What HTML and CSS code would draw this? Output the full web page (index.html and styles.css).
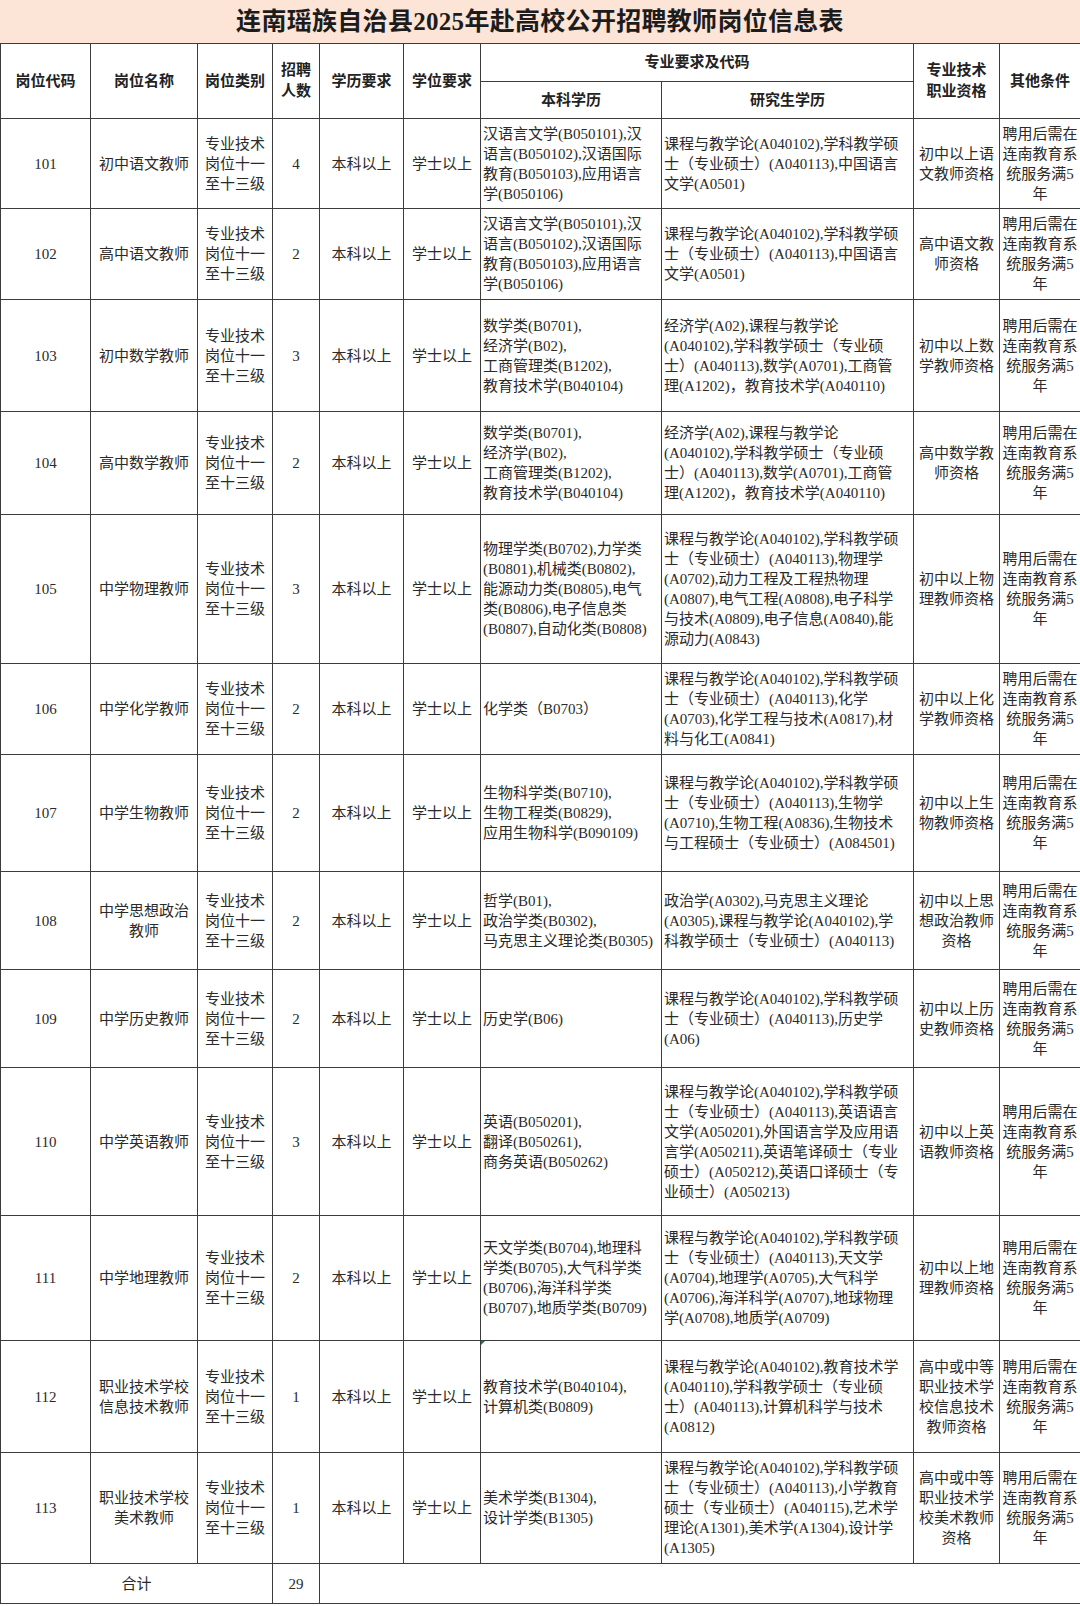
FILE: index.html
```html
<!DOCTYPE html>
<html lang="zh-CN">
<head>
<meta charset="utf-8">
<title>连南瑶族自治县2025年赴高校公开招聘教师岗位信息表</title>
<link rel="stylesheet" href="styles.css">
</head>
<body>
<div class="sheet">
  <div class="title">连南瑶族自治县2025年赴高校公开招聘教师岗位信息表</div>
  <table class="grid">
    <colgroup>
      <col class="c1"><col class="c2"><col class="c3"><col class="c4"><col class="c5">
      <col class="c6"><col class="c7"><col class="c8"><col class="c9"><col class="c10">
    </colgroup>
    <thead>
      <tr class="h38">
        <th rowspan="2">岗位代码</th>
        <th rowspan="2">岗位名称</th>
        <th rowspan="2">岗位类别</th>
        <th rowspan="2">招聘<br>人数</th>
        <th rowspan="2">学历要求</th>
        <th rowspan="2">学位要求</th>
        <th colspan="2">专业要求及代码</th>
        <th rowspan="2">专业技术<br>职业资格</th>
        <th rowspan="2">其他条件</th>
      </tr>
      <tr class="h37">
        <th>本科学历</th>
        <th>研究生学历</th>
      </tr>
    </thead>
    <tbody>
      <tr class="h90">
        <td>101</td><td>初中语文教师</td><td>专业技术<br>岗位十一<br>至十三级</td><td>4</td><td>本科以上</td><td>学士以上</td>
        <td class="left">汉语言文学(B050101),汉<br>语言(B050102),汉语国际<br>教育(B050103),应用语言<br>学(B050106)</td>
        <td class="left">课程与教学论(A040102),学科教学硕<br>士（专业硕士）(A040113),中国语言<br>文学(A0501)</td>
        <td>初中以上语<br>文教师资格</td><td>聘用后需在<br>连南教育系<br>统服务满5<br>年</td>
      </tr>
      <tr class="h91">
        <td>102</td><td>高中语文教师</td><td>专业技术<br>岗位十一<br>至十三级</td><td>2</td><td>本科以上</td><td>学士以上</td>
        <td class="left">汉语言文学(B050101),汉<br>语言(B050102),汉语国际<br>教育(B050103),应用语言<br>学(B050106)</td>
        <td class="left">课程与教学论(A040102),学科教学硕<br>士（专业硕士）(A040113),中国语言<br>文学(A0501)</td>
        <td>高中语文教<br>师资格</td><td>聘用后需在<br>连南教育系<br>统服务满5<br>年</td>
      </tr>
      <tr class="h112">
        <td>103</td><td>初中数学教师</td><td>专业技术<br>岗位十一<br>至十三级</td><td>3</td><td>本科以上</td><td>学士以上</td>
        <td class="left">数学类(B0701),<br>经济学(B02),<br>工商管理类(B1202),<br>教育技术学(B040104)</td>
        <td class="left">经济学(A02),课程与教学论<br>(A040102),学科教学硕士（专业硕<br>士）(A040113),数学(A0701),工商管<br>理(A1202)，教育技术学(A040110)</td>
        <td>初中以上数<br>学教师资格</td><td>聘用后需在<br>连南教育系<br>统服务满5<br>年</td>
      </tr>
      <tr class="h103">
        <td>104</td><td>高中数学教师</td><td>专业技术<br>岗位十一<br>至十三级</td><td>2</td><td>本科以上</td><td>学士以上</td>
        <td class="left">数学类(B0701),<br>经济学(B02),<br>工商管理类(B1202),<br>教育技术学(B040104)</td>
        <td class="left">经济学(A02),课程与教学论<br>(A040102),学科教学硕士（专业硕<br>士）(A040113),数学(A0701),工商管<br>理(A1202)，教育技术学(A040110)</td>
        <td>高中数学教<br>师资格</td><td>聘用后需在<br>连南教育系<br>统服务满5<br>年</td>
      </tr>
      <tr class="h149">
        <td>105</td><td>中学物理教师</td><td>专业技术<br>岗位十一<br>至十三级</td><td>3</td><td>本科以上</td><td>学士以上</td>
        <td class="left">物理学类(B0702),力学类<br>(B0801),机械类(B0802),<br>能源动力类(B0805),电气<br>类(B0806),电子信息类<br>(B0807),自动化类(B0808)</td>
        <td class="left">课程与教学论(A040102),学科教学硕<br>士（专业硕士）(A040113),物理学<br>(A0702),动力工程及工程热物理<br>(A0807),电气工程(A0808),电子科学<br>与技术(A0809),电子信息(A0840),能<br>源动力(A0843)</td>
        <td>初中以上物<br>理教师资格</td><td>聘用后需在<br>连南教育系<br>统服务满5<br>年</td>
      </tr>
      <tr class="h91">
        <td>106</td><td>中学化学教师</td><td>专业技术<br>岗位十一<br>至十三级</td><td>2</td><td>本科以上</td><td>学士以上</td>
        <td class="left">化学类（B0703）</td>
        <td class="left">课程与教学论(A040102),学科教学硕<br>士（专业硕士）(A040113),化学<br>(A0703),化学工程与技术(A0817),材<br>料与化工(A0841)</td>
        <td>初中以上化<br>学教师资格</td><td>聘用后需在<br>连南教育系<br>统服务满5<br>年</td>
      </tr>
      <tr class="h117">
        <td>107</td><td>中学生物教师</td><td>专业技术<br>岗位十一<br>至十三级</td><td>2</td><td>本科以上</td><td>学士以上</td>
        <td class="left">生物科学类(B0710),<br>生物工程类(B0829),<br>应用生物科学(B090109)</td>
        <td class="left">课程与教学论(A040102),学科教学硕<br>士（专业硕士）(A040113),生物学<br>(A0710),生物工程(A0836),生物技术<br>与工程硕士（专业硕士）(A084501)</td>
        <td>初中以上生<br>物教师资格</td><td>聘用后需在<br>连南教育系<br>统服务满5<br>年</td>
      </tr>
      <tr class="h98">
        <td>108</td><td>中学思想政治<br>教师</td><td>专业技术<br>岗位十一<br>至十三级</td><td>2</td><td>本科以上</td><td>学士以上</td>
        <td class="left">哲学(B01),<br>政治学类(B0302),<br>马克思主义理论类(B0305)</td>
        <td class="left">政治学(A0302),马克思主义理论<br>(A0305),课程与教学论(A040102),学<br>科教学硕士（专业硕士）(A040113)</td>
        <td>初中以上思<br>想政治教师<br>资格</td><td>聘用后需在<br>连南教育系<br>统服务满5<br>年</td>
      </tr>
      <tr class="h98">
        <td>109</td><td>中学历史教师</td><td>专业技术<br>岗位十一<br>至十三级</td><td>2</td><td>本科以上</td><td>学士以上</td>
        <td class="left">历史学(B06)</td>
        <td class="left">课程与教学论(A040102),学科教学硕<br>士（专业硕士）(A040113),历史学<br>(A06)</td>
        <td>初中以上历<br>史教师资格</td><td>聘用后需在<br>连南教育系<br>统服务满5<br>年</td>
      </tr>
      <tr class="h148">
        <td>110</td><td>中学英语教师</td><td>专业技术<br>岗位十一<br>至十三级</td><td>3</td><td>本科以上</td><td>学士以上</td>
        <td class="left">英语(B050201),<br>翻译(B050261),<br>商务英语(B050262)</td>
        <td class="left">课程与教学论(A040102),学科教学硕<br>士（专业硕士）(A040113),英语语言<br>文学(A050201),外国语言学及应用语<br>言学(A050211),英语笔译硕士（专业<br>硕士）(A050212),英语口译硕士（专<br>业硕士）(A050213)</td>
        <td>初中以上英<br>语教师资格</td><td>聘用后需在<br>连南教育系<br>统服务满5<br>年</td>
      </tr>
      <tr class="h125">
        <td>111</td><td>中学地理教师</td><td>专业技术<br>岗位十一<br>至十三级</td><td>2</td><td>本科以上</td><td>学士以上</td>
        <td class="left">天文学类(B0704),地理科<br>学类(B0705),大气科学类<br>(B0706),海洋科学类<br>(B0707),地质学类(B0709)</td>
        <td class="left">课程与教学论(A040102),学科教学硕<br>士（专业硕士）(A040113),天文学<br>(A0704),地理学(A0705),大气科学<br>(A0706),海洋科学(A0707),地球物理<br>学(A0708),地质学(A0709)</td>
        <td>初中以上地<br>理教师资格</td><td>聘用后需在<br>连南教育系<br>统服务满5<br>年</td>
      </tr>
      <tr class="h112">
        <td>112</td><td>职业技术学校<br>信息技术教师</td><td>专业技术<br>岗位十一<br>至十三级</td><td>1</td><td>本科以上</td><td>学士以上</td>
        <td class="left marked"><span class="flag"></span>教育技术学(B040104),<br>计算机类(B0809)</td>
        <td class="left">课程与教学论(A040102),教育技术学<br>(A040110),学科教学硕士（专业硕<br>士）(A040113),计算机科学与技术<br>(A0812)</td>
        <td>高中或中等<br>职业技术学<br>校信息技术<br>教师资格</td><td>聘用后需在<br>连南教育系<br>统服务满5<br>年</td>
      </tr>
      <tr class="h111">
        <td>113</td><td>职业技术学校<br>美术教师</td><td>专业技术<br>岗位十一<br>至十三级</td><td>1</td><td>本科以上</td><td>学士以上</td>
        <td class="left">美术学类(B1304),<br>设计学类(B1305)</td>
        <td class="left">课程与教学论(A040102),学科教学硕<br>士（专业硕士）(A040113),小学教育<br>硕士（专业硕士）(A040115),艺术学<br>理论(A1301),美术学(A1304),设计学<br>(A1305)</td>
        <td>高中或中等<br>职业技术学<br>校美术教师<br>资格</td><td>聘用后需在<br>连南教育系<br>统服务满5<br>年</td>
      </tr>
      <tr class="h40">
        <td colspan="3">合计</td><td>29</td><td colspan="6"></td>
      </tr>
    </tbody>
  </table>
</div>
</body>
</html>
```
FILE: styles.css
```css
html, body {
  margin: 0;
  padding: 0;
  background: #ffffff;
}

.sheet {
  width: 1080px;
  font-family: "Liberation Serif", "Noto Sans CJK SC", serif;
  color: #2a2a2a;
}

.title {
  height: 43px;
  line-height: 43px;
  background: #fce4d6;
  text-align: center;
  font-size: 25px;
  font-weight: 700;
  color: #1c1c1c;
  letter-spacing: 0.3px;
}

.grid {
  width: 1080px;
  border-collapse: collapse;
  table-layout: fixed;
  font-size: 15px;
  line-height: 20px;
}

.c1 { width: 90px; }
.c2 { width: 107px; }
.c3 { width: 75px; }
.c4 { width: 47px; }
.c5 { width: 84px; }
.c6 { width: 77px; }
.c7 { width: 181px; }
.c8 { width: 252px; }
.c9 { width: 86px; }
.c10 { width: 81px; }

.grid th,
.grid td {
  border: 1px solid #3c3c3c;
  padding: 0 2px;
  text-align: center;
  vertical-align: middle;
  white-space: nowrap;
  overflow: visible;
}

.grid th {
  font-size: 15px;
  font-weight: 700;
  color: #222222;
  line-height: 21px;
}

.grid td.left {
  text-align: left;
  padding: 0 1px 0 2px;
}

.grid td.marked {
  position: relative;
}

.flag {
  position: absolute;
  left: 0;
  top: 0;
  width: 0;
  height: 0;
  border-top: 4px solid #1f7a36;
  border-right: 4px solid transparent;
}

.h37 { height: 37px; }
.h38 { height: 38px; }
.h40 { height: 40px; }
.h90 { height: 90px; }
.h91 { height: 91px; }
.h98 { height: 98px; }
.h103 { height: 103px; }
.h111 { height: 111px; }
.h112 { height: 112px; }
.h117 { height: 117px; }
.h125 { height: 125px; }
.h148 { height: 148px; }
.h149 { height: 149px; }
```
